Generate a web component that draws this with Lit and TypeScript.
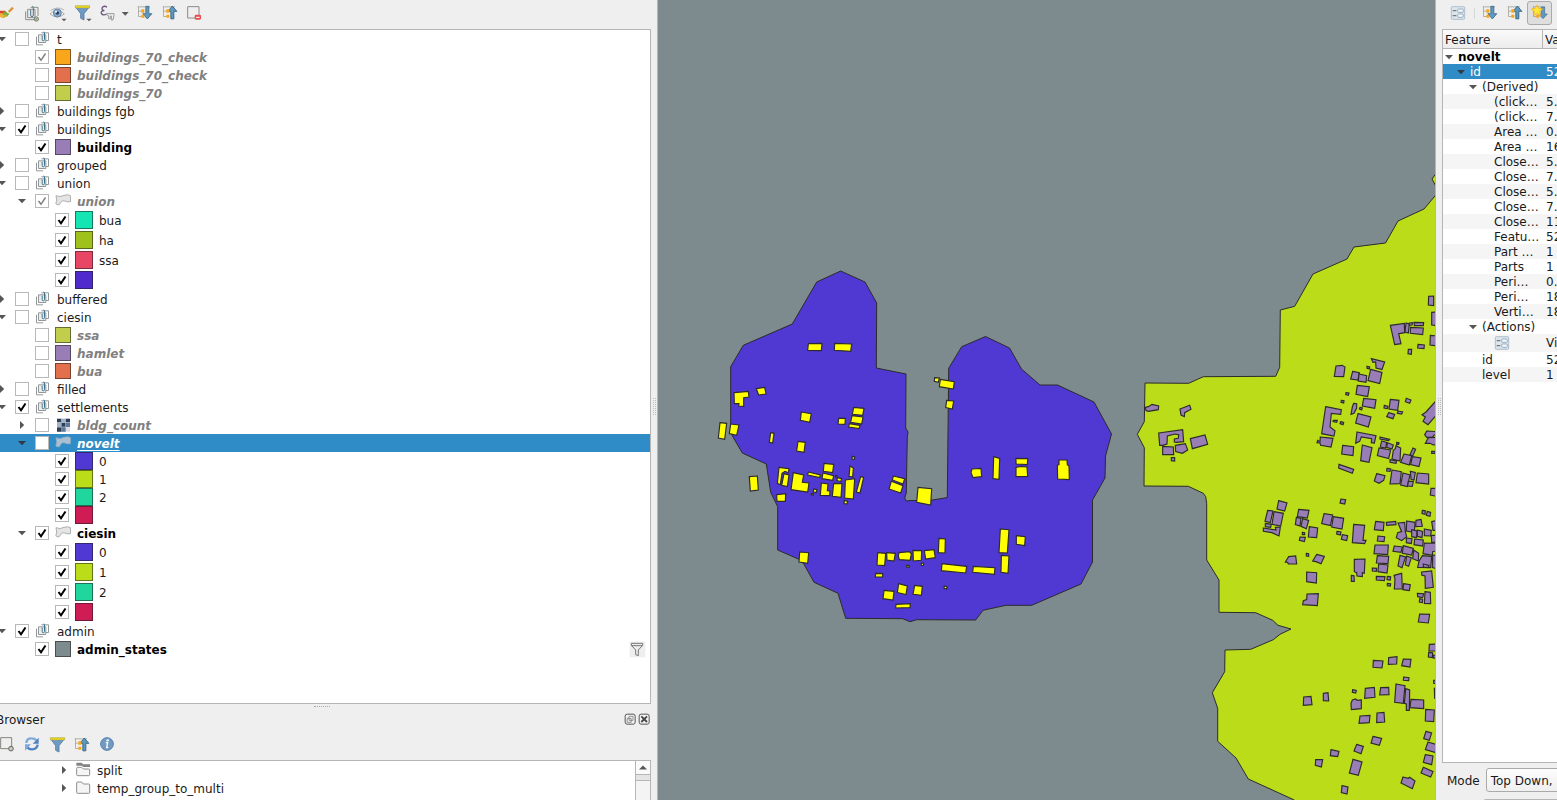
import { LitElement, html, svg, css, nothing } from "lit";
import { customElement } from "lit/decorators.js";
import { classMap } from "lit/directives/class-map.js";

/* ---------- icons: drawn on a 3x grid, each in its own view box ---------- */
const icon = (x: number, y: number, w: number, h: number, body: unknown) =>
  html`<svg width=${w / 3} height=${h / 3} viewBox="${x} ${y} ${w} ${h}">${body}</svg>`;

const treeLines = svg`<path d="M413 20.500H450 M415.500 20V49.500H425 M415.500 33.500H425" fill="none" stroke="#a3a396" stroke-width="2.5"/>`;
const treeNodes = svg`<path d="M424 28h9v10h-9z M424 44h9v9h-9z" fill="#f7a51a"/>`;
const arrowDown = svg`<path d="M437.500 19h9v22h9l-13.500 16-13.500-16h9z" fill="#6198c0" stroke="#3a6c8d" stroke-width="2.5"/>`;
const arrowUp = svg`<path d="M437.500 56.500h9V34h9L442 18 428.500 34h9z" fill="#6198c0" stroke="#285d7a" stroke-width="2.5"/>`;
const expandAll = icon(396, 0, 75, 78, svg`${treeLines}${arrowDown}${treeNodes}`);
const collapseAll = icon(396, 0, 75, 78, svg`${treeLines}${arrowUp}${treeNodes}`);
const expandNew = icon(396, 0, 75, 78, svg`${treeLines}<path d="M439 21h10v21h8l-13 14-13-14h8z" fill="#6198c0" stroke="#3f6f8f" stroke-width="2"/>${treeNodes}
  <path d="M426 15l5 10 12 2-9 8 3 12-11-6-11 6 3-12-9-8 12-2z" fill="#ffe730" stroke="#f0a320" stroke-width="2"/>`);
const broom = icon(-18, 0, 75, 78, svg`<path d="M26 36L39 23" stroke="#d8953a" stroke-width="7"/><path d="M-3 36L15 33 27 42 10 55-8 48z" fill="#f0b43c"/>
  <path d="M-4 36h18l5 7" stroke="#d9442b" stroke-width="7" fill="none"/><path d="M12 34l16 8-8 9-12-8z" fill="#76b043"/><path d="M10 52l9-7" stroke="#d8b01c" stroke-width="5"/>`);
const addGroup = icon(57, 0, 75, 78, svg`<g fill="none" stroke="#8a8d89" stroke-width="3"><path d="M77 34v25h28"/><path d="M83 28h22v25H83z" fill="#e6e8e8"/><path d="M92 22h22v26"/></g>
  <path d="M92 30v15q0 5 4 5t4-5V23q0-4-3-4" fill="none" stroke="#48798d" stroke-width="3"/><circle cx="109" cy="57" r="6.5" fill="#cdd0c8" stroke="#777d6d" stroke-width="3"/><path d="M109 53v8m-4-4h8" stroke="#888e7c" stroke-width="2"/>`);
const eye = icon(132, 0, 75, 78, svg`<path d="M150 42Q172 20 193 42Q172 60 150 42z" fill="#f4f4f4" stroke="#a0a0a0" stroke-width="2.5"/><path d="M151 32Q172 17 192 30" fill="none" stroke="#aaa" stroke-width="2.5"/>
  <circle cx="172" cy="39" r="12" fill="#8eabca" stroke="#547ba3" stroke-width="2.5"/><circle cx="172" cy="39" r="5.5" fill="#24435f"/><circle cx="168" cy="35" r="3" fill="#fff"/><path d="M184 56h16l-8 8z" fill="#5a5a5a"/>`);
const funnel = svg`<path d="M227 21H268L252 41V60L242 55V41z" fill="#6e9bc6" stroke="#54779b" stroke-width="2.5"/><path d="M226 17h43v7h-43z" fill="#ead71e" stroke="#a4a04a" stroke-width="1.5"/>`;
const filter = icon(207, 0, 75, 78, svg`${funnel}<path d="M259 56h16l-8 8z" fill="#5a5a5a"/>`);
const filterPlain = icon(207, 0, 75, 78, funnel);
const expression = icon(282, 0, 75, 78, svg`<path d="M321 22Q314 16 308 21Q302 29 313 32Q302 32 304 40Q308 48 321 42" fill="none" stroke="#6d5780" stroke-width="4"/>
  <path d="M319 41h23v5l-3 14h-5v-12h-3v8h-5V47l-7-3z" fill="#eee" stroke="#999" stroke-width="3"/>`);
const dropArrow = icon(357, 0, 39, 78, svg`<path d="M365 36h21l-10 11z" fill="#5a5a5a"/>`);
const removeLayer = icon(546, 0, 75, 78, svg`<path d="M563 20h34v34h-34z" fill="#efefef" stroke="#8c8c86" stroke-width="3"/><rect x="584" y="44" width="19" height="15" rx="4" fill="#e3504f"/><path d="M588 52h11" stroke="#fff" stroke-width="3"/>`);
const formBody = svg`<rect x="64" y="20" width="40" height="38" rx="3" fill="#dce5ec" stroke="#a4b6c7" stroke-width="2.5"/><path d="M68 32h11M68 47h11" stroke="#6f8084" stroke-width="4"/>
  <rect x="83" y="27" width="17" height="10" rx="3" fill="#f5f8fa" stroke="#8ba5bc" stroke-width="2.5"/><rect x="83" y="42" width="17" height="10" rx="3" fill="#f5f8fa" stroke="#8ba5bc" stroke-width="2.5"/>`;
const form = icon(60, 0, 48, 78, formBody);
const formRow = icon(60, 12, 48, 54, formBody);
const addItem = icon(-18, 126, 75, 75, svg`<path d="M2 143h33v33H2z" fill="#efefef" stroke="#84847e" stroke-width="3"/><circle cx="33" cy="176" r="7" fill="#c5c8bd" stroke="#656961" stroke-width="3"/>`);
const refresh = icon(57, 126, 75, 75, svg`<g fill="none" stroke-width="7"><path d="M79 159Q80 144 95 145Q104 145 109 151" stroke="#80a9da"/><path d="M113 164Q111 178 96 178Q85 178 82 171" stroke="#4e83c1"/></g>
  <path d="M116 143v18H98z" fill="#4e83c1"/><path d="M75 182v-19h18z" fill="#80a9da"/>`);
const info = icon(282, 126, 75, 75, svg`<circle cx="321" cy="162" r="19" fill="#7199c2" stroke="#547faa" stroke-width="3"/><circle cx="323" cy="151" r="3.5" fill="#fff"/><path d="M317 158h6l-3 15h5" fill="none" stroke="#fff" stroke-width="4"/>`);
const groupIcon = icon(105, 90, 45, 54, svg`<g fill="none" stroke="#94979a" stroke-width="3"><path d="M109.500 110v24.500h20"/><path d="M115.500 104.500h22v23h-22z" fill="#ebeeee"/><path d="M124 98.500h21.500v23h-8"/></g>
  <path d="M126.500 107v11q0 4.500 3.500 4.500t3.500-4.500V99q0-3-3-3" fill="none" stroke="#3d7287" stroke-width="3"/>`);
const polyPath = "M168 587Q180 593 192 586Q204 582 211.500 587L211.500 605Q202 607 195 603Q188 600 183 606L178 614Q170 616 167.500 611L170 600z";
const polygonIcon = icon(165, 576, 48, 54, svg`<path d=${polyPath} fill="#e4e4e4" stroke="#a2a2a2" stroke-width="2.5"/>`);
const polygonSel = icon(165, 576, 48, 54, svg`<path d=${polyPath} fill="#a9bfd2" stroke="#8eabc2" stroke-width="2.5"/>`);
const rasterIcon = icon(165, 4, 48, 54, svg`<rect x="171" y="12" width="39" height="39" fill="#d5dde6"/><path d="M171 12h13v11h-13z M197 12h13v11h-13z M184 24h12v12h-12z M171 38h13v13h-13z" fill="#2f3e57"/>
  <path d="M184 12h13v12h-13z M171 24h13v14h-13z" fill="#9fb2c8"/><path d="M197 24h13v13h-13z M184 38h13v13h-13z" fill="#5f7896"/>`);
const folder = icon(225, 270, 48, 54, svg`<path d="M230 282q0-3 3-3h12l5 6h16q3 0 3 3v22q0 3-3 3h-33q-3 0-3-3z" fill="#f5f5f5" stroke="#8e8e8e" stroke-width="3"/>`);
const folderLinked = icon(225, 216, 48, 54, svg`<path d="M229 221h16l4 5h21v8h-20l-5-4h-16z" fill="#838383"/><path d="M230 238q0-3 3-3h12l5 5h16q3 0 3 3v14q0 3-3 3h-33q-3 0-3-3z" fill="#f5f5f5" stroke="#8e8e8e" stroke-width="3"/>`);
const indicator = icon(117, 33, 51, 51, svg`<path d="M119 35h47v47h-47z" fill="#eee"/><path d="M124 40h34v6l-13 14v17l-8-3V60l-13-14z M124 47h33" fill="none" stroke="#777" stroke-width="3"/>`);
const floatBtn = icon(100, 250, 36, 36, svg`<rect x="103.500" y="253.500" width="30" height="30" rx="6" fill="#f2f2f2" stroke="#555" stroke-width="3"/><path d="M115 260h12v12h-12z M109.500 266h12v12h-12z" fill="#f4f4f4" stroke="#666" stroke-width="2"/>`);
const closeBtn = icon(142, 250, 36, 36, svg`<rect x="145.500" y="253.500" width="30" height="30" rx="6" fill="#f2f2f2" stroke="#555" stroke-width="3"/><path d="M152 260l17 17m0-17l-17 17" stroke="#444" stroke-width="5.500"/>`);

const triangle = (open: boolean, dark = false) => html`<svg class="tri" width="8" height="8" viewBox="0 0 8 8">
  <path d=${open ? "M0 2H8L4 6.200z" : "M2 0V8L6.200 4z"} fill=${dark ? "#2f3a44" : "#555"} /></svg>`;

/* ---------- layer tree ---------- */
interface Row {
  d: number; label: string; kind: "group" | "layer" | "poly" | "raster" | "cls";
  on?: boolean; open?: boolean; color?: string; tall?: boolean; off?: boolean; sel?: boolean; ind?: boolean;
}
const g = (label: string, open: boolean, on = false): Row => ({ d: 0, label, kind: "group", open, on });
const l = (label: string, color: string, on = false, off = true): Row => ({ d: 1, label, kind: "layer", color, on, off });
const c = (label: string, color: string, tall = false): Row => ({ d: 2, label, kind: "cls", color, on: true, tall });
const rows: Row[] = [
  g("t", true), l("buildings_70_check", "#faa61a", true), l("buildings_70_check", "#e2704c"), l("buildings_70", "#c0ce4c"),
  g("buildings fgb", false), g("buildings", true, true), l("building", "#987db7", true, false),
  g("grouped", false), g("union", true),
  { d: 1, label: "union", kind: "poly", open: true, on: true, off: true },
  c("bua", "#15e4b3", true), c("ha", "#9ec11c", true), c("ssa", "#e84664", true), c("", "#4f2bcb", true),
  g("buffered", false), g("ciesin", true), l("ssa", "#c0ce4c"), l("hamlet", "#987db7"), l("bua", "#e2704c"),
  g("filled", false), g("settlements", true, true),
  { d: 1, label: "bldg_count", kind: "raster", open: false, off: true },
  { d: 1, label: "novelt", kind: "poly", open: true, off: true, sel: true },
  c("0", "#5038d2"), c("1", "#bbdc18"), c("2", "#20d69c"), c("", "#d01c55"),
  { d: 1, label: "ciesin", kind: "poly", open: true, on: true },
  c("0", "#5038d2", true), c("1", "#bbdc18", true), c("2", "#20d69c", true), c("", "#d01c55", true),
  g("admin", true, true), { ...l("admin_states", "#7d8b8f", true, false), ind: true },
];

/* ---------- identify results: level, name, value, open ---------- */
const results: [number, string, string, boolean?][] = [
  [0, "novelt", "", true], [1, "id", "52", true], [2, "(Derived)", "", true],
  [3, "(click…", "5."], [3, "(click…", "7."], [3, "Area …", "0."], [3, "Area …", "16"],
  [3, "Close…", "5."], [3, "Close…", "7."], [3, "Close…", "5."], [3, "Close…", "7."], [3, "Close…", "11"],
  [3, "Featu…", "52"], [3, "Part …", "1"], [3, "Parts", "1"], [3, "Peri…", "0."], [3, "Peri…", "18"], [3, "Verti…", "18"],
  [2, "(Actions)", "", true], [3, "", "Vi"], [2, "id", "52"], [2, "level", "1"],
];

/* ---------- map features: point lists, ';' between polygons ---------- */
const BLUE = "840.700,271 865,282 876.700,303 876.300,368 906,374 905.700,428 908,432 907.300,437 906.300,493 904.700,498 906,501 911,500.500 930,500.500 947.300,497.500 948.700,368.300 961.700,346.700 985.500,336.500 1009.500,348 1021.500,369 1040,385 1057.500,385 1094,402 1111.500,434 1105.500,456 1105,478 1092.500,500 1092.500,562 1081,584 1031.700,605.300 1006,605.300 983,610.300 975.700,620 916.700,619.700 910,621.700 902.700,618.700 845.700,618.300 838,593.300 814,582.300 803.700,563.700 798.300,559 777.700,550 777.700,506.700 770.700,492.300 766.300,464 742.300,453 730.700,433 730.700,366.700 743.300,345.300 792.300,324 816.700,282";
const LIME = "1440,190 1424,209 1398,221 1385.500,243 1354,247 1347,259 1313,274 1294.700,306.300 1280.300,310 1279.700,367.300 1275.700,376.300 1203.300,376.700 1188.700,383.300 1145,383 1144.300,421.700 1137.300,434.300 1144.300,447.700 1144,486 1188.300,486.300 1203.300,493.300 1205.700,496.700 1206.700,503.300 1206.700,560 1219,580 1219,612.300 1255.700,612.700 1272.700,620.300 1278,625.300 1291,629 1280,634.300 1273.300,639.700 1250.700,649.300 1225,650 1224.700,671.700 1212.300,692.700 1217.700,708.300 1217.700,741.300 1236,758 1248.300,779 1294.300,800 1300,806 1440,806";
const yellow: [number, number, string][] = [
  [700, 260, "325,251 366,250 364,272 323,271;404,250 455,252 452,274 403,271;102,398 145,394 147,411 131,413 131,439 116,438 117,431 103,431;169,386 194,382 198,402 176,405;60,488 80,490 74,538 55,534;92,492 117,495 110,526 88,521;304,456 334,461 329,487 301,481;416,475 436,475 435,493 414,492;461,442 492,445 488,466 457,463;456,467 489,471 485,492 452,487;448,491 480,496 477,506 446,501;212,518 222,520 218,549 208,547;294,544 316,547 312,577 290,573;148,650 172,648 175,690 151,693;230,704 257,701 256,724 231,724;237,622 267,626 265,638 255,634 246,640 241,674 232,670;252,641 267,645 262,680 245,676;280,638 311,645 307,667 327,669 323,696 273,689;325,636 361,645 359,653 323,645;372,610 401,613 398,638 370,634;369,639 401,647 398,661 366,656;412,653 425,656 422,665 411,662;407,647 411,647 411,651 407,651;457,589 464,590 463,598 456,597;450,618 460,624 458,651 447,649;436,660 464,656 460,717 434,714;482,650 491,652 480,699 469,696;401,670 426,671 423,712 397,709;364,669 384,672 382,692 390,693 389,707 361,706;341,687 351,689 348,698 340,695;334,701 340,700 340,705 334,705;433,721 443,724 441,732 432,731;580,648 614,656 609,672 577,660;574,664 609,677 602,699 567,687;654,682 695,686 692,735 650,727;704,353 718,354 715,367 703,364;721,358 763,365 760,387 718,380;740,421 761,423 757,447 737,443"],
  [760, 440, "636,87 663,85 665,110 639,113 633,97;701,50 719,55 717,118 699,116;768,55 803,56 802,74 768,72;768,82 782,79 801,81 803,109 768,110;119,336 146,338 143,370 117,366;353,338 377,340 374,377 351,375;380,338 406,340 402,363 381,360;417,338 448,335 454,342 450,361 418,359 415,348;459,331 485,332 484,361 460,363;493,332 522,329 526,353 497,357;537,295 556,297 555,339 535,338;721,267 747,269 742,339 717,338;724,346 747,348 744,400 723,397;769,287 796,290 794,317 769,313;546,371 620,379 617,399 544,392;640,379 705,383 703,403 638,397;347,400 368,401 368,411 346,411;372,451 402,454 399,480 369,476;416,431 442,438 438,464 412,458;464,436 487,439 484,466 459,463;408,493 451,491 450,503 407,504;440,376 448,377 447,382 440,381;484,369 491,370 490,377 484,376;553,438 561,440 560,447 552,445;897,60 921,60 922,74 927,78 928,119 893,117 892,76 897,74"],
];
const purple: [number, number, string][] = [
  [1130, 280, "46,382 55,380 66,373 86,378 85,389 55,394 48,392;150,387 179,376 183,388 164,398 163,410 153,405;86,459 158,449 161,485 140,487 133,486 133,477 145,475 146,464 135,462 112,468 111,492 98,496 89,496;98,499 130,501 131,524 98,524;136,496 166,491 173,510 157,520 137,515;181,476 225,465 233,493 187,506;124,533 134,533 134,543 124,542;896,49 911,48 911,77 895,75;905,97 925,96 925,137 905,135;901,166 925,168 925,198 900,195;781,136 823,130 824,158 806,161 813,191 794,194;828,129 838,132 835,159 825,156;838,129 849,128 846,135 838,136;853,127 881,128 880,137 853,137;841,142 880,144 878,164 841,160;835,208 845,208 844,223 834,221;864,193 883,195 882,206 863,204;618,258 636,256 645,261 641,290 613,289;724,236 764,246 756,269 738,264 737,246 729,247;711,259 719,261 718,267 711,265;668,274 688,278 684,300 662,297;687,282 710,287 708,307 685,303;722,268 756,277 749,311 714,302;682,316 718,320 713,350 678,343;648,338 657,339 655,346 647,344;634,361 642,362 641,369 633,367;701,355 738,359 734,385 697,378;671,370 680,371 680,384 672,400 663,403 667,381;690,382 697,384 695,390 688,387;684,401 723,411 715,441 677,429;781,358 807,361 803,391 777,387;763,376 774,379 772,386 762,384;776,398 794,403 789,416 770,410;804,393 818,396 815,402 802,400;829,355 843,360 839,370 826,365;587,380 634,389 632,403 604,400 600,441 615,452 612,468 575,461;610,421 622,421 620,427 609,425;632,425 641,427 639,434 630,431;571,471 609,475 603,501 572,496 570,489 561,488 563,481 570,485;638,496 671,500 669,527 635,522;681,456 738,467 733,489 724,488 725,476 694,471 689,484 677,490;697,495 726,503 717,547 692,542;627,553 671,568 667,580 626,564;750,471 779,478 776,482 750,477;755,483 770,487 767,504 751,501;773,488 790,495 786,507 770,502;747,504 782,510 776,536 742,527;790,511 796,506 798,497 812,504 810,543 786,537;780,539 800,543 798,550 780,547;849,504 857,508 848,528 840,524;822,522 845,527 838,555 812,547;847,530 873,534 867,560 842,554;771,565 782,567 780,574 770,573;740,581 765,587 761,601 747,610 733,603;786,570 814,575 810,611 780,612;819,579 840,585 832,620 812,615;841,574 856,577 852,600 843,598;835,604 850,604 847,619 833,618;862,579 896,582 896,612 858,608;888,396 925,354 925,398 894,434 879,424 886,411 876,404;890,453 925,455 925,465 912,465 908,472 890,472 884,464;895,473 925,472 925,494 910,495 900,490 886,490;905,514 915,514 915,520 905,520;903,625 925,625 925,650 901,645;800,487 807,488 806,493 800,493"],
  [1200, 480, "236,62 261,69 254,93 231,87;203,91 219,93 211,128 195,124;222,95 250,100 242,138 216,133;196,130 214,133 212,142 196,140;190,144 228,150 226,142 241,141 237,168 216,158 190,154;296,88 327,91 322,114 292,110;289,112 303,115 300,138 286,134;308,116 326,121 319,146 303,139;328,140 353,144 350,173 325,171;307,157 314,158 314,164 307,164;300,171 316,172 313,185 298,181;372,101 398,105 391,137 365,131;400,110 431,115 426,147 395,141;411,154 423,156 421,165 410,162;427,164 443,167 440,182 424,178;423,57 437,59 434,72 420,69;461,133 494,136 489,181 498,181 494,191 457,188;527,124 552,127 550,152 523,149;559,127 587,124 588,134 560,136;534,168 554,170 552,185 532,183;525,195 565,195 563,224 522,221;532,227 566,229 564,251 529,249;536,252 564,255 561,279 534,275;517,264 530,265 529,274 517,273;529,289 555,290 553,302 529,300;562,289 572,290 571,300 561,299;562,310 572,311 571,318 562,317;463,238 495,237 493,280 487,278 487,290 471,288 470,278 463,275;454,286 462,287 463,304 454,304;266,230 287,228 290,252 265,252 263,247 256,246;319,220 326,221 326,229 319,228;350,223 373,229 363,251 348,245 338,243;320,276 350,278 349,309 320,305;321,342 355,341 352,377 308,374 310,362 320,359;583,198 607,201 603,217 579,214;610,197 640,205 635,225 607,220;600,226 617,231 606,263 594,258;620,228 634,233 626,259 616,255;641,210 656,220 655,243 638,236;594,129 614,127 616,155 620,170 605,182 589,173 593,158 605,155;620,123 645,127 643,158 619,153;648,121 663,118 667,139 647,140;635,149 651,153 650,173 635,170;652,150 668,154 666,173 652,169;673,147 694,151 692,168 673,167;619,174 636,176 634,191 619,188;644,177 670,180 668,198 642,194;667,91 676,92 675,103 666,101;682,94 692,97 690,109 679,106;695,125 715,120 715,151 699,151;694,166 715,166 715,185 695,188;673,189 715,190 715,212 698,215 697,226 669,221;667,227 695,229 692,263 653,262 657,244;670,252 687,256 685,263 670,261;698,226 715,225 715,267 697,263;665,276 695,273 700,322 676,325 675,288 665,285;582,286 605,280 607,327 583,327 585,297;611,311 631,314 628,332 609,329;652,340 671,341 668,353 653,350;675,335 691,337 692,371 673,370 674,356;659,356 668,358 667,368 658,366;659,402 689,403 685,429 655,426"],
  [1200, 640, "688,13 715,12 715,33 687,33;686,37 698,38 697,53 685,51;700,45 715,47 715,55 700,54;520,61 549,63 546,84 519,82;566,53 591,50 590,72 565,73;610,57 633,58 630,81 605,77;611,111 627,113 626,122 610,121;496,145 523,142 525,172 494,175;542,143 566,142 567,164 539,165;458,149 469,151 467,159 457,157;457,180 466,177 472,181 484,180 484,206 454,209 453,190;588,132 615,137 610,190 584,187;617,146 629,150 628,211 619,211 619,192 613,190;633,178 671,180 671,206 630,203;677,208 703,210 701,245 676,243;703,145 715,146 715,178 704,175;701,121 715,121 715,131 701,130;311,171 333,169 336,194 310,196;370,160 384,158 386,183 370,182;480,228 510,226 508,248 477,250;531,219 552,217 554,246 530,248;519,289 545,295 538,316 513,309;470,313 490,319 483,341 462,333;393,329 417,334 413,350 391,347;347,359 368,359 364,381 346,376;459,358 486,366 475,406 448,399;426,437 444,441 441,462 424,458;609,411 625,415 629,412 645,423 637,446 603,429;678,274 695,279 688,301 671,296;684,306 715,315 715,340 676,329;676,344 699,348 695,374 670,367;670,382 699,395 692,411 663,399"],
];
const polys = (sets: [number, number, string][], fill: string) => sets.map(([x, y, s]) =>
  svg`<g transform="translate(${x} ${y}) scale(.33333)" fill=${fill}>${s.split(";").map((p) => svg`<polygon class="f bd" points=${p} />`)}</g>`);

@customElement("app-root")
export class AppRoot extends LitElement {
  static styles = css`
    :host { display: flex; width: 1557px; height: 800px; overflow: hidden; background: #efefef;
      font: 12px/15px "DejaVu Sans", sans-serif; color: #1a1a1a; white-space: nowrap; }
    * { box-sizing: border-box; }
    svg { display: block; flex: none; }
    .left { width: 651px; flex: none; display: flex; flex-direction: column; }
    .bar { display: flex; flex: none; height: 29px; align-items: flex-start; }
    .bar.main, .bar.br { margin-left: -6px; }
    .tree { width: 651px; height: 675px; border: 1px solid #b5b5b5; border-left: 0; background: #fff; flex: none; }
    .row { display: flex; align-items: center; height: 18px; padding-left: calc(var(--d) * 20px); }
    .row span { padding-top: 2px; }
    .d0 { --d: 0; } .d1 { --d: 1; } .d2 { --d: 2; }
    .tall { height: 20px; }
    .sel { background: #308cc6; }
    .exp { width: 17px; flex: none; margin-left: -2px; }
    .cb { width: 14px; height: 14px; border: 1px solid #b8b8b8; background: #fff; flex: none; margin-right: 6px; }
    .ic { width: 22px; flex: none; display: flex; }
    .cls .ic { width: 24px; }
    .sw { width: 16px; height: 16px; border: 1px solid rgba(30, 30, 30, .55); }
    .cls .sw { width: 18px; height: 18px; }
    .b { font-weight: bold; color: #000; }
    .off { font-weight: bold; font-style: italic; color: #808080; }
    .sel .off { color: #fff; text-decoration: underline; text-underline-offset: 2px; }
    .ind { margin-left: auto; margin-right: 4px; }
    .grip { height: 5px; width: 16px; margin-left: 314px; margin-top: 2px; border-top: 1px dotted #aaa; flex: none; }
    .title { height: 17px; display: flex; align-items: center; padding-right: 1px; flex: none; margin-left: -4px; }
    .title span { padding-top: 2px; }
    .title .sp { flex: 1; }
    .title svg { margin-left: 2px; margin-top: -1px; }
    .bar.br { height: 32px; padding-top: 4px; }
    .browser { width: 651px; height: 42px; border: 1px solid #b5b5b5; border-left: 0; background: #fff; display: flex; flex: none; overflow: hidden; }
    .files { flex: 1; }
    .file { display: flex; align-items: center; height: 18px; padding-left: 60px; }
    .file .ic { width: 22px; margin-left: 7px; }
    .file span { padding-top: 2px; }
    .scroll { width: 15px; border-left: 1px solid #b5b5b5; background: #f4f4f4; }
    .up { height: 13px; display: flex; justify-content: center; align-items: center; background: #fafafa; }
    .thumb { height: 7px; border-top: 1px solid #b5b5b5; border-bottom: 1px solid #b5b5b5; background: #e4e4e4; }
    .split { width: 7px; border-right: 1px solid #b5b5b5; flex: none; display: flex; align-items: center; }
    .side { flex: none; width: 7px; border-left: 1px solid #b5b5b5; display: flex; align-items: center; }
    .dots { width: 3px; height: 17px; border: 1px dotted #bbb; border-width: 0 1px; margin-top: 12px; margin-left: 2px; }
    .f { stroke: #2b2b2b; stroke-width: 1px; vector-effect: non-scaling-stroke; }
    .bd { stroke-width: 1.15px; }
    .right { flex: none; width: 115px; display: flex; flex-direction: column; overflow: hidden; }
    .rbar { display: flex; height: 29px; flex: none; padding-left: 8px; }
    .sep { width: 1px; height: 11px; background: #d8d8d8; margin: 8px 2px 0 8px; }
    .act { width: 25px; height: 24px; margin-top: 1px; border: 1px solid #aaa; border-radius: 3px; background: #dedede; overflow: hidden; flex: none; }
    .act svg { margin: -2px 0 0 -1px; }
    .res { height: 734px; flex: none; border: 1px solid #b5b5b5; border-right: 0; background: #fff; }
    .head { display: flex; height: 19px; border-bottom: 1px solid #b5b5b5; background: linear-gradient(#fafafa, #ececec); line-height: 20px; }
    .head .n { padding-left: 2px; width: 100px; flex: none; border-right: 1px solid #b5b5b5; }
    .head .v { padding-left: 2px; }
    .r .v { padding-left: 3px; }
    .r { display: flex; height: 15px; align-items: center; }
    .lines .r:nth-child(even) { background: #f5f5f5; }
    .r .n { width: 100px; display: flex; align-items: center; flex: none; }
    .r .n span, .r .v { padding-top: 1px; }
    .r .n .tx { width: 15px; flex: none; padding-left: 2px; }
    .l0 { padding-left: 0; } .l1 { padding-left: 12px; } .l2 { padding-left: 24px; } .l3 { padding-left: 36px; }
    .r.act-row { height: 18px; }
    .lines .r.rs { background: #308cc6; color: #fff; }
    .n.l0 { font-weight: bold; color: #000; }
    .mode { display: flex; align-items: center; height: 34px; padding-left: 5px; flex: none; }
    .mode span { padding-top: 2px; }
    .combo { margin-left: 6px; width: 100px; height: 24px; border: 1px solid #aaa; border-radius: 3px; padding-left: 4px; line-height: 25px; background: linear-gradient(#fdfdfd, #efefef); flex: none; }
    .next { margin: 2px 0 0 41px; width: 100px; height: 5px; border: 1px solid #b5b5b5; border-radius: 3px; flex: none; }
  `;

  private row(r: Row) {
    const glyph = r.kind === "group" ? groupIcon : r.kind === "raster" ? rasterIcon
      : r.kind === "poly" ? (r.sel ? polygonSel : polygonIcon)
      : html`<div class="sw" style="background-color:${r.color}"></div>`;
    const text = r.off ? "off" : r.kind === "layer" || r.kind === "poly" ? "b" : "";
    return html`<div class=${classMap({ row: true, [`d${r.d}`]: true, tall: !!r.tall, sel: !!r.sel, [r.kind]: true })}>
      <div class="exp">${r.open === undefined ? nothing : triangle(r.open, r.sel)}</div>
      <div class="cb">${r.on ? html`<svg width="12" height="12" viewBox="0 0 12 12"><path d="M2.500 6L5 9.300L9.500 2.500" fill="none" stroke=${r.off ? "#808080" : "#000"} stroke-width=${r.off ? 1.5 : 2} /></svg>` : nothing}</div>
      <div class="ic">${glyph}</div>${r.label ? html`<span class=${text}>${r.label}</span>` : nothing}
      ${r.ind ? html`<div class="ind">${indicator}</div>` : nothing}
    </div>`;
  }

  render() {
    return html`
      <div class="left">
        <div class="bar main">${broom}${addGroup}${eye}${filter}${expression}${dropArrow}${expandAll}${collapseAll}${removeLayer}</div>
        <div class="tree">${rows.map((r) => this.row(r))}</div>
        <div class="grip"></div>
        <div class="title"><span>Browser</span><div class="sp"></div>${floatBtn}${closeBtn}</div>
        <div class="bar br">${addItem}${refresh}${filterPlain}${collapseAll}${info}</div>
        <div class="browser">
          <div class="files">
            <div class="file">${triangle(false)}<div class="ic">${folderLinked}</div><span>split</span></div>
            <div class="file">${triangle(false)}<div class="ic">${folder}</div><span>temp_group_to_multi</span></div>
          </div>
          <div class="scroll"><div class="up"><svg width="8" height="5" viewBox="0 0 8 5"><path d="M0 4.500L4 0.500L8 4.500z" fill="#555" /></svg></div><div class="thumb"></div></div>
        </div>
      </div>
      <div class="split"><div class="dots"></div></div>
      <svg width="777" height="800" viewBox="658 0 777 800">
        <rect x="658" width="777" height="800" fill="#7d8b8f" />
        <polygon class="f" fill="#bbdc18" points="1440,168 1432,179 1440,194" />
        <polygon class="f" fill="#bbdc18" points=${LIME} />
        <polygon class="f" fill="#5038d2" points=${BLUE} />
        ${polys(purple, "#987db7")}${polys(yellow, "#ffff00")}
      </svg>
      <div class="side"><div class="dots"></div></div>
      <div class="right">
        <div class="rbar">${form}<div class="sep"></div>${expandAll}${collapseAll}<div class="act">${expandNew}</div></div>
        <div class="res">
          <div class="head"><div class="n">Feature</div><div class="v">Value</div></div>
          <div class="lines">
          ${results.map(([lv, name, value, open], i) => html`<div class=${classMap({ r: true, rs: i === 1, "act-row": i === 19 })}>
            <div class="n l${lv}"><div class="tx">${open ? triangle(true, i === 1) : nothing}</div>${name ? html`<span>${name}</span>` : formRow}</div>
            ${value ? html`<div class="v">${value}</div>` : nothing}</div>`)}
          </div>
        </div>
        <div class="mode"><span>Mode</span><div class="combo">Top Down, Stop at First</div></div>
        <div class="next"></div>
      </div>`;
  }
}
